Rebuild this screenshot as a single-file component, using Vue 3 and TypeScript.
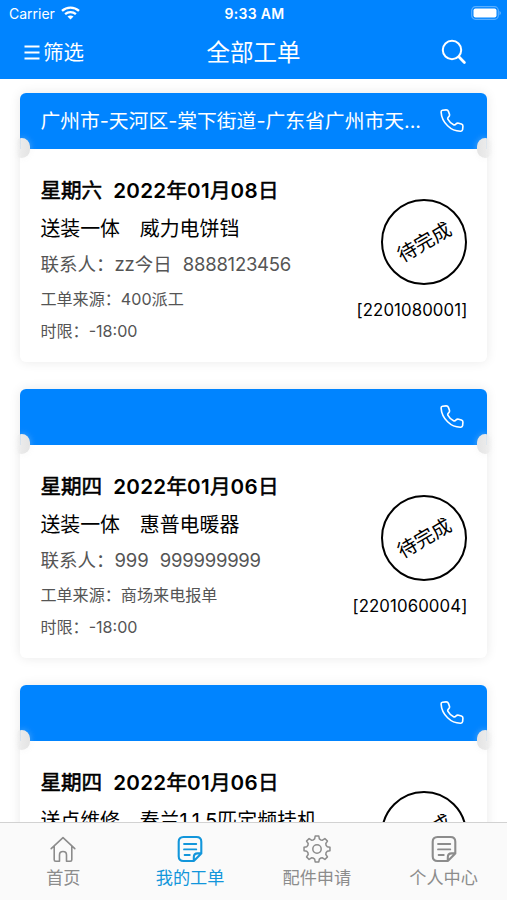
<script setup lang="ts">
interface Order {
  address: string
  weekday: string
  date: string
  service: string
  product: string
  status: string
  contact?: string
  phone?: string
  source?: string
  limit?: string
  code?: string
}

interface Tab {
  label: string
  icon: 'home' | 'note' | 'gear'
  active: boolean
}

const orders: Order[] = [
  {
    address: '广州市-天河区-棠下街道-广东省广州市天...',
    weekday: '星期六', date: '2022年01月08日',
    service: '送装一体', product: '威力电饼铛',
    contact: 'zz今日', phone: '8888123456',
    source: '400派工', limit: '-18:00', status: '待完成', code: '[2201080001]',
  },
  {
    address: '',
    weekday: '星期四', date: '2022年01月06日',
    service: '送装一体', product: '惠普电暖器',
    contact: '999', phone: '999999999',
    source: '商场来电报单', limit: '-18:00', status: '待完成', code: '[2201060004]',
  },
  {
    address: '',
    weekday: '星期四', date: '2022年01月06日',
    service: '送点维修', product: '春兰1.1.5匹定频挂机',
    status: '待完成',
  },
]

const tabs: Tab[] = [
  { label: '首页', icon: 'home', active: false },
  { label: '我的工单', icon: 'note', active: true },
  { label: '配件申请', icon: 'gear', active: false },
  { label: '个人中心', icon: 'note', active: false },
]

// Splits a date into runs of digits and single characters, so each gets its own weight
function dateParts(date: string): string[] {
  return date.match(/\d+|\D/g) ?? []
}

function isNumber(part: string): boolean {
  return /^\d/.test(part)
}

// Outline of an eight-toothed cog centred on (14, 14)
function gearPath(): string {
  const profile: [number, number][] = [
    [-22.5, 9.8], [-13, 10.4], [-8, 13.1], [8, 13.1], [13, 10.4], [22.5, 9.8],
  ]
  const points: string[] = []
  for (let tooth = 0; tooth < 8; tooth++) {
    for (const [offset, radius] of profile) {
      const angle = ((tooth * 45 + offset) * Math.PI) / 180
      points.push(`${(14 + radius * Math.sin(angle)).toFixed(2)} ${(14 - radius * Math.cos(angle)).toFixed(2)}`)
    }
  }
  return `M${points.join('L')}Z`
}
const cog = gearPath()
</script>

<template>
  <div class="screen">
    <header class="top">
      <div class="status-bar">
        <div class="carrier">
          <span>Carrier</span>
          <svg width="19" height="14" viewBox="0 0 19 14" fill="none" stroke="#fff" stroke-width="2.3">
            <path d="M1 4.9C5.8 .4 13.2 .4 18 4.9" />
            <path d="M4.1 8.2c3.1-2.8 7.7-2.8 10.8 0" />
            <path d="M6.5 10.5c1.8-1.5 4.2-1.5 6 0l-3 3z" fill="#fff" stroke="none" />
          </svg>
        </div>
        <span class="clock">9:33 AM</span>
        <div class="power">
          <svg width="31" height="14" viewBox="0 0 31 14">
            <rect x=".7" y=".7" width="26.6" height="12.6" rx="3.8" fill="none" stroke="#fff" stroke-opacity=".35" stroke-width="1.2" />
            <rect x="2.5" y="2.4" width="23" height="9.2" rx="2" fill="#fff" />
            <path d="M28.5 4.7q2.8 2.3 0 4.6z" fill="#fff" opacity=".4" />
          </svg>
        </div>
      </div>
      <div class="title-bar">
        <div class="filter">
          <svg width="16" height="16" viewBox="0 0 16 16" stroke="#fff" stroke-width="1.9">
            <path d="M.5 1.5h15M.5 7.5h15M.5 13.5h15" />
          </svg>
          <span>筛选</span>
        </div>
        <h1>全部工单</h1>
        <div class="search">
          <svg width="26" height="26" viewBox="0 0 26 26" fill="none" stroke="#fff" stroke-width="2">
            <circle cx="11" cy="11" r="9.2" />
            <path d="m17.8 17.8 5.6 5.6" stroke-width="2.8" stroke-linecap="round" />
          </svg>
        </div>
      </div>
    </header>

    <main class="orders">
      <article v-for="(order, index) in orders" :key="index" class="card">
        <div class="card-head">
          <span class="address">{{ order.address }}</span>
          <svg width="24" height="24" viewBox="0 0 24 24" fill="none" stroke="#fff" stroke-width="1.6" stroke-linejoin="round">
            <path d="M2.5 1.3 6 .9q1.8-.1 2.4 1.5l1 2.7q.5 1.5-.6 2.5Q7.2 9 8 10.3q2 3.7 5.6 5.4 1.3.6 2.4-.8 1.1-1.1 2.6-.7l2.8.9q1.7.6 1.5 2.4l-.3 3.2q-.3 1.4-1.7 1.5-7.7.2-13.3-5.4Q1.5 10.8 1.1 3q0-1.4 1.4-1.7Z" />
          </svg>
        </div>
        <i class="notch left"></i>
        <i class="notch right"></i>
        <div class="card-body">
          <div class="details">
            <p class="when">
              <span class="word">{{ order.weekday }}</span>
              <span class="date"><span v-for="(part, i) in dateParts(order.date)" :key="i" :class="isNumber(part) ? 'number' : 'word'">{{ part }}</span></span>
            </p>
            <p class="job">{{ order.service }}　{{ order.product }}</p>
            <p v-if="order.contact" class="contact"><span>联系人：{{ order.contact }}</span><span class="phone">{{ order.phone }}</span></p>
            <p v-if="order.source" class="source">工单来源：{{ order.source }}</p>
            <p v-if="order.limit" class="limit">时限：{{ order.limit }}</p>
          </div>
          <div class="side">
            <div class="stamp"><span>{{ order.status }}</span></div>
            <span v-if="order.code" class="code">{{ order.code }}</span>
          </div>
        </div>
      </article>
    </main>

    <nav class="tabs">
      <div v-for="tab in tabs" :key="tab.label" class="tab" :class="{ active: tab.active }">
        <svg width="28" height="28" viewBox="0 0 28 28" fill="none" stroke="currentColor" stroke-width="1.6" stroke-linejoin="round" stroke-linecap="round">
          <path v-if="tab.icon === 'home'" d="M2.2 13.6 14 2.6l11.8 11M5.2 11.1v13.6q0 1.5 1.5 1.5h3.8v-6.3q0-3.4 3.5-3.4t3.5 3.4v6.3h3.8q1.5 0 1.5-1.5V11.1" />
          <g v-else-if="tab.icon === 'note'">
            <path stroke-width="2.1" d="M17.8 26H7.5Q2.7 26 2.7 21.2V6.8Q2.7 2 7.5 2h13q4.8 0 4.8 4.8v11.6L17.8 26v-3.8q0-3.8 3.8-3.8h3.7" />
            <path stroke-width="1.8" d="M8 9h12.3M8 14.4h12.3M8.6 20h5.2" />
          </g>
          <g v-else stroke-width="1.5">
            <path :d="cog" />
            <circle cx="14" cy="14" r="4.2" />
          </g>
        </svg>
        <span>{{ tab.label }}</span>
      </div>
    </nav>
  </div>
</template>

<style>
body {
  margin: 0;
  background: #fff;
}
</style>

<style scoped>
.screen {
  display: flex;
  flex-direction: column;
  width: 507px;
  height: 900px;
  overflow: hidden;
  background: #fff;
  color: #000;
  font-family: Inter, "Noto Sans CJK SC", sans-serif;
}

.screen svg {
  display: block;
  flex: none;
}

.top {
  flex: none;
  height: 79px;
  color: #fff;
  background: #0084ff;
}

.status-bar,
.title-bar {
  display: grid;
  grid-template-columns: 1fr auto 1fr;
  align-items: center;
}

.status-bar {
  height: 28px;
  padding: 0 5px 0 9px;
  font-size: 14px;
  line-height: 28px;
}

.carrier {
  display: flex;
  align-items: center;
  gap: 6px;
}

.carrier svg {
  margin-top: -2px;
}

.clock {
  margin: 0 0 0 -2px;
  font-size: 14px;
  font-weight: 600;
  letter-spacing: 0.3px;
}

.power {
  display: flex;
  justify-content: flex-end;
  margin-top: -2px;
}

.title-bar {
  height: 51px;
  padding: 0 40px 0 24px;
}

.filter {
  display: flex;
  align-items: center;
  gap: 3px;
  font-size: 20.5px;
  line-height: 30px;
  margin-top: -1px;
}

.filter svg {
  margin-top: -1px;
}

.title-bar h1 {
  margin: -2px 0 0;
  padding-left: 16px;
  font-size: 23.5px;
  font-weight: 400;
  line-height: 34px;
}

.search {
  display: flex;
  justify-content: flex-end;
  margin-top: -3px;
}

.orders {
  flex: 1;
  min-height: 0;
  display: flex;
  flex-direction: column;
  gap: 27px;
  padding: 14px 19.6px 0 20.4px;
  overflow: hidden;
}

.card {
  position: relative;
  flex: none;
  height: 269px;
  border-radius: 6px;
  background: #fff;
  box-shadow: 0 0 12px rgba(0, 0, 0, 0.09);
}

.card-head {
  display: flex;
  align-items: center;
  justify-content: space-between;
  box-sizing: border-box;
  height: 56px;
  padding: 0 23px 0 20px;
  border-radius: 6px 6px 0 0;
  color: #fff;
  background: #0084ff;
}

.address {
  white-space: nowrap;
  font-size: 19.8px;
  line-height: 30px;
}

.notch {
  position: absolute;
  top: 45px;
  width: 15px;
  height: 20px;
  filter: drop-shadow(0 0 3px rgba(230, 230, 230, 0.35));
}

.notch.left {
  left: -5px;
  border-radius: 8px 10px 10px 8px;
  background: linear-gradient(to right, rgba(240, 240, 240, 0) 10%, #ebebeb 40%, #e4e4e4);
}

.notch.right {
  right: -5px;
  border-radius: 10px 8px 8px 10px;
  background: linear-gradient(to left, rgba(240, 240, 240, 0.3) 10%, #ebebeb 40%, #e4e4e4);
}

.card-body {
  display: flex;
  justify-content: space-between;
  padding: 0 20px;
}

.details p {
  margin: 0;
  white-space: nowrap;
}

.details .when {
  display: flex;
  gap: 11px;
  padding-top: 23px;
  font-size: 20.6px;
  line-height: 38px;
}

.when .word {
  -webkit-text-stroke: 0.55px #000;
}

.when .number {
  font-weight: 600;
  letter-spacing: 0.3px;
}

.details .job {
  font-size: 19.9px;
  line-height: 39px;
}

.details .contact {
  display: flex;
  gap: 11px;
  color: #555;
  font-size: 18.5px;
  line-height: 31px;
}

.phone {
  letter-spacing: -0.25px;
}

.details .source,
.details .limit {
  color: #555;
  font-size: 16.1px;
}

.details .source {
  padding-top: 1px;
  line-height: 36px;
}

.details .limit {
  line-height: 29px;
}

.side {
  display: flex;
  flex-direction: column;
  align-items: flex-end;
  padding-top: 50px;
}

.stamp {
  display: flex;
  align-items: center;
  justify-content: center;
  box-sizing: border-box;
  width: 86px;
  height: 86px;
  border: 2.4px solid #000;
  border-radius: 50%;
}

.stamp span {
  font-size: 19.5px;
  line-height: 28px;
  transform: rotate(-30deg);
}

.code {
  margin-top: 13px;
  font-size: 16.8px;
  line-height: 25px;
  letter-spacing: 0.1px;
}

.tabs {
  flex: none;
  display: grid;
  grid-template-columns: repeat(4, 1fr);
  box-sizing: border-box;
  height: 78px;
  border-top: 1px solid #d2d2d2;
  background: #fafafa;
}

.tab {
  display: flex;
  flex-direction: column;
  align-items: center;
  padding-top: 12px;
  color: #8c8c8c;
  font-size: 17.2px;
  line-height: 30px;
}

.tab.active {
  color: #1296db;
}
</style>
